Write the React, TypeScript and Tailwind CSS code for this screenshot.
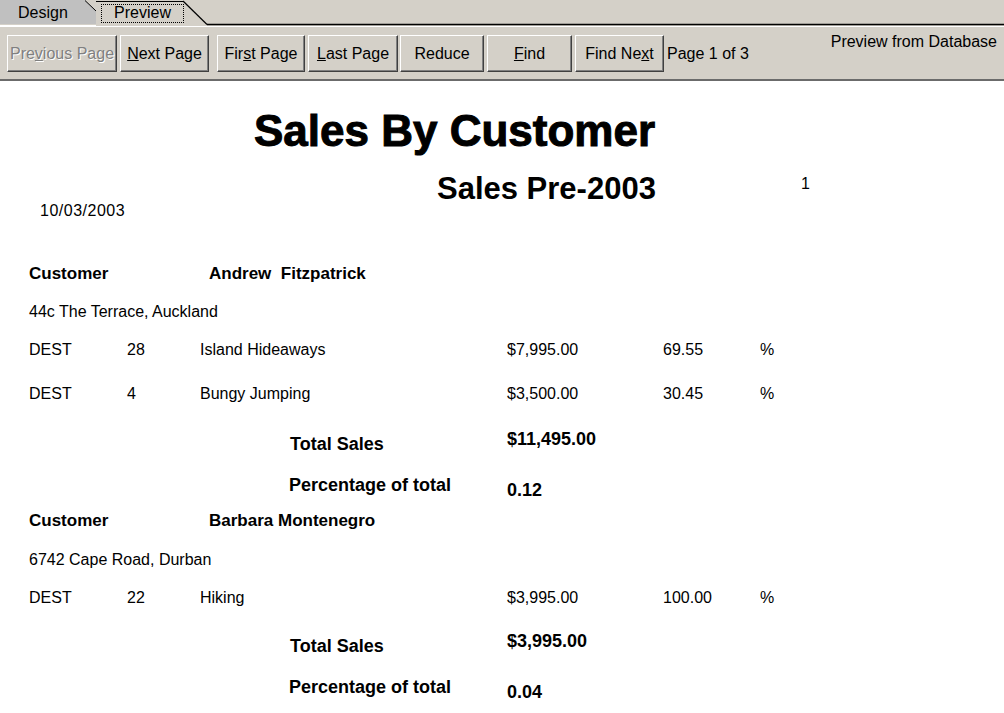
const sans = "font-['Liberation_Sans',Arial,sans-serif]";

type Item = { code: string; qty: string; name: string; amount: string; pct: string };

const customers: {
  name: string;
  address: string;
  items: Item[];
  total: string;
  share: string;
}[] = [
  {
    name: "Andrew\u00a0\u00a0Fitzpatrick",
    address: "44c The Terrace, Auckland",
    items: [
      { code: "DEST", qty: "28", name: "Island Hideaways", amount: "$7,995.00", pct: "69.55" },
      { code: "DEST", qty: "4", name: "Bungy Jumping", amount: "$3,500.00", pct: "30.45" },
    ],
    total: "$11,495.00",
    share: "0.12",
  },
  {
    name: "Barbara Montenegro",
    address: "6742 Cape Road, Durban",
    items: [{ code: "DEST", qty: "22", name: "Hiking", amount: "$3,995.00", pct: "100.00" }],
    total: "$3,995.00",
    share: "0.04",
  },
];

function ToolButton({
  children,
  className,
  disabled,
}: {
  children: React.ReactNode;
  className: string;
  disabled?: boolean;
}) {
  return (
    <button
      type="button"
      className={`flex h-[37px] items-center justify-center border border-t-white border-l-white border-r-[#404040] border-b-[#404040] bg-[#d4d0c8] text-[16px] shadow-[inset_-1px_-1px_0_#808080] ${
        disabled ? "text-[#808080] [text-shadow:1px_1px_0_#ffffff]" : "text-black"
      } ${className}`}
    >
      {children}
    </button>
  );
}

function DataRow({ item, className }: { item: Item; className: string }) {
  return (
    <div className={`grid grid-cols-[98px_73px_307px_156px_97px_40px] items-center pl-[29px] text-[16px] ${className}`}>
      <span>{item.code}</span>
      <span>{item.qty}</span>
      <span>{item.name}</span>
      <span>{item.amount}</span>
      <span>{item.pct}</span>
      <span>%</span>
    </div>
  );
}

function CustomerBlock({
  c,
  heights,
}: {
  c: (typeof customers)[number];
  heights: string[];
}) {
  const [hHead, hAddr, hTotal, hShare] = heights;
  return (
    <div>
      <div className={`flex items-center pl-[29px] text-[17px] font-bold ${hHead}`}>
        <span className="w-[180px]">Customer</span>
        <span>{c.name}</span>
      </div>
      <div className={`flex items-center pl-[29px] text-[16px] ${hAddr}`}>{c.address}</div>
      {c.items.map((item, i) => (
        <DataRow
          key={item.name}
          item={item}
          className={i === c.items.length - 1 && c.items.length > 1 ? "h-[50px]" : "h-[38px]"}
        />
      ))}
      <div className={`flex items-center font-bold ${hTotal}`}>
        <span className="w-[507px] pl-[290px] text-[18px]">Total Sales</span>
        <span className="mb-[10px] text-[18px]">{c.total}</span>
      </div>
      <div className={`flex items-center font-bold ${hShare}`}>
        <span className="w-[507px] pl-[289px] text-[18px]">Percentage of total</span>
        <span className="mt-[10px] text-[18px]">{c.share}</span>
      </div>
    </div>
  );
}

export default function App() {
  return (
    <div className={`h-[713px] w-[1004px] overflow-hidden bg-white text-black ${sans}`}>
      {/* tab strip */}
      <div className="relative h-[26px] bg-[#d4d0c8]">
        <svg className="absolute inset-0" width="1004" height="26" viewBox="0 0 1004 26">
          <polygon points="0,0 85,0 96,11 96,24 0,24" fill="#c0c0c0" />
          <line x1="85" y1="0.5" x2="96" y2="11" stroke="#000" strokeWidth="1" />
          <line x1="96" y1="1.5" x2="183" y2="1.5" stroke="#000" strokeWidth="1" />
          <line x1="183" y1="1" x2="207" y2="24.5" stroke="#000" strokeWidth="1.2" />
          <line x1="207" y1="24.5" x2="1004" y2="24.5" stroke="#000" strokeWidth="1.4" />
          <line x1="0" y1="25.5" x2="96" y2="25.5" stroke="#ffffff" strokeWidth="1" />
        </svg>
        <div className="relative flex h-full items-center text-[16px]">
          <span className="ml-[18px] w-[83px]">Design</span>
          <span className="flex h-[19px] w-[83px] items-center justify-center border border-dotted border-black">
            Preview
          </span>
        </div>
      </div>

      {/* toolbar */}
      <div className="flex h-[55px] border-t border-t-white border-b-2 border-b-[#6b6b6b] bg-[#d4d0c8] pt-[8px]">
        <div className="flex h-[37px] items-center">
          <ToolButton className="ml-[7px] w-[110px]" disabled>
            Pre<u>v</u>ious Page
          </ToolButton>
          <ToolButton className="ml-[3px] w-[89px]">
            <u>N</u>ext Page
          </ToolButton>
          <ToolButton className="ml-[8px] w-[88px]">
            Fir<u>s</u>t Page
          </ToolButton>
          <ToolButton className="ml-[3px] w-[90px]">
            <u>L</u>ast Page
          </ToolButton>
          <ToolButton className="ml-[2px] w-[84px]">Reduce</ToolButton>
          <ToolButton className="ml-[3px] w-[85px]">
            <u>F</u>ind
          </ToolButton>
          <ToolButton className="ml-[3px] w-[89px]">
            Find Ne<u>x</u>t
          </ToolButton>
          <span className="ml-[3px] text-[16px]">Page 1 of 3</span>
        </div>
        <span className="ml-auto mr-[7px] -mt-[5px] text-[16px]">Preview from Database</span>
      </div>

      {/* report page */}
      <div className="pt-[28px]">
        <h1 className="h-[44px] pl-[254px] text-[44px] leading-[44px] font-bold [-webkit-text-stroke:1px_#000]">
          Sales By Customer
        </h1>
        <div className="mt-[12px] flex h-[56px] items-start">
          <span className="mt-[34px] w-[437px] pl-[40px] text-[16px] tracking-[0.5px]">10/03/2003</span>
          <span className="mt-[6px] w-[364px] text-[31px] leading-[36px] font-bold">Sales Pre-2003</span>
          <span className="mt-[7px] text-[16px]">1</span>
        </div>
        <div className="mt-[33px]">
          <CustomerBlock c={customers[0]} heights={["h-[39px]", "h-[38px]", "h-[50px]", "h-[32px]"]} />
          <CustomerBlock c={customers[1]} heights={["h-[40px]", "h-[38px]", "h-[58px]", "h-[24px]"]} />
        </div>
      </div>
    </div>
  );
}
